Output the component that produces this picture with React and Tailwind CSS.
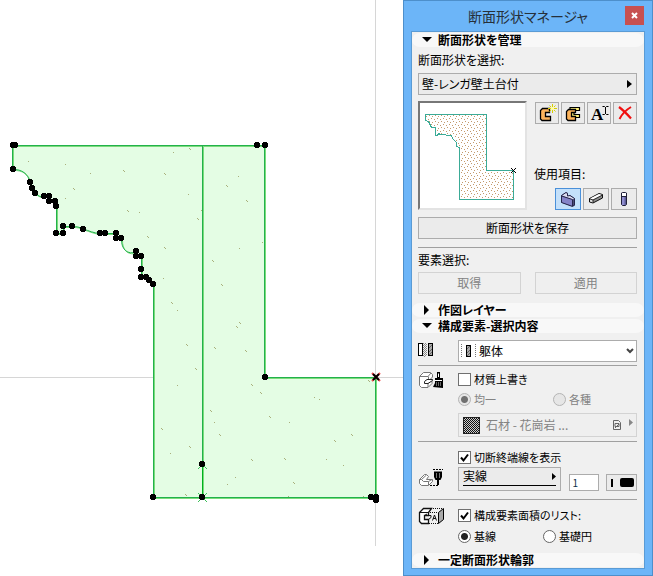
import { useState } from 'react';
import clsx from 'clsx';

const outline =
  'M12.5 145.5H264.5V377.5H375.5V497.5H153.5V284L149 280L146 277.5H141.5V256.5H136.5V252C128 255 121 250 121.5 238.5H116.5V233.5H100C93 233 90 231 83 229C79 227 77 226.5 72 226.5H63.5V233.5H56.5V206L55 201.5H49.5V196.5H44C40 197 38 196 35 193L32 188L30 182C28 174 22 169 12.5 169.5Z';

const nodes = [
  [13, 145], [15, 145], [257, 145], [265, 145], [13, 169], [30, 182], [32, 188], [35, 193],
  [44, 196], [49, 196], [49, 201], [55, 201], [56, 206], [56, 233], [63, 233], [63, 226],
  [72, 226], [83, 229], [100, 233], [105, 233], [116, 233], [116, 238], [121, 238],
  [136, 251], [136, 256], [141, 256], [141, 269], [141, 277], [146, 277], [149, 280],
  [153, 284], [153, 497], [202, 464], [202, 497], [371, 497], [376, 497], [376, 500], [265, 377],
];

const specks = [
  [28, 161], [65, 164], [90, 173], [115, 146], [173, 152], [65, 198], [188, 194], [139, 212],
  [201, 210], [163, 278], [238, 176], [239, 248], [262, 242], [177, 310], [177, 385],
  [214, 422], [170, 453], [235, 477], [227, 484], [289, 422], [314, 397], [319, 399],
  [326, 459], [343, 465], [288, 496], [363, 496],
];

const doubleSpecks = [
  [123, 170], [189, 148], [164, 173], [73, 188], [127, 210], [197, 218], [147, 236], [164, 247],
  [226, 185], [246, 200], [212, 260], [221, 284], [171, 302], [186, 344], [214, 347], [245, 350],
  [236, 326], [239, 322], [195, 368], [251, 384], [368, 380], [260, 392], [269, 416],
  [210, 410], [219, 434], [161, 428], [189, 446], [251, 459], [284, 458], [293, 482],
  [334, 440], [351, 434], [185, 494],
];

function ProfileCanvas() {
  return (
    <svg className="block h-[576px] w-full" viewBox="0 0 403 576" preserveAspectRatio="xMinYMin slice" fill="none">
      <path d="M375.5 0V546M0 377.5H403" stroke="#d6d6d6" />
      <path d={outline} fill="#e4fde4" />
      <path d={outline} stroke="#7bdc7b" transform="translate(1 1)" />
      <path d="M203.5 146V497" stroke="#7bdc7b" />
      <path d={outline} stroke="#22b14c" />
      <path d="M202.5 146V497" stroke="#22b14c" />
      <path d="M202.5 464V497" stroke="#00b020" />
      <g fill="#a9b07c">
        {specks.map(([x, y]) => <rect key={`${x}-${y}`} x={x} y={y} width="1" height="1" />)}
        {doubleSpecks.map(([x, y]) => (
          <path key={`${x}-${y}`} d={`M${x} ${y}h1v1h1v1h-1v-1h-1z`} />
        ))}
      </g>
      <path d="M198 469l3-3M207 469l-3-3M198 493l9 9M207 493l-9 9" stroke="#3cc05a" />
      {nodes.map(([x, y]) => (
        <path key={`${x}-${y}`} d={`M${x - 2} ${y - 3}h4v1h1v4h-1v1h-4v-1h-1v-4h1z`} fill="#000" />
      ))}
      <path d="M372 373l8 8M380 373l-8 8" stroke="#f04848" strokeWidth="2" />
      <path d="M373 374l6 6M379 374l-6 6" stroke="#000" strokeWidth="2" />
    </svg>
  );
}

function Preview() {
  return (
    <div className="size-[109px] shrink-0 border-2 border-t-[#777] border-l-[#777] border-r-[#e3e3e3] border-b-[#e3e3e3] bg-white">
      <svg className="block size-[105px]" viewBox="0 0 105 105" shapeRendering="crispEdges">
        <defs>
          <pattern id="dots" width="6" height="6" patternUnits="userSpaceOnUse">
            <path d="M0 1h1v1H0zM3 0h1v1H3zM5 3h1v1H5zM2 4h1v1H2z" fill="#c39a6b" />
          </pattern>
        </defs>
        <path
          d="M5.500 11.500H66.500V67.500H93.500V96.500H39.500V44.500L36.500 43.500V39.500L34.500 37.500L32.500 35.500L31.500 32.500L20.500 31.500L18.500 30.500L17.500 32.500H15.500V24.500H11.500L10.500 22.500L8.500 18.500L5.500 17.500Z"
          fill="url(#dots)"
          stroke="#3bab97"
        />
        <path d="M91 65l5 5M96 65l-5 5" stroke="#000" />
      </svg>
    </div>
  );
}

const icons = {
  create: (
    <>
      <path d="M6.500 5.500H13.500V9.500H9.500V13.500H14.500V17.500H6L4.500 16V7.500Z" fill="#fdb45c" stroke="#000" strokeWidth="1.300" />
      <path d="M16.500 1v9M12 5.500h9M13.500 2.500l6 6M19.500 2.500l-6 6" stroke="#d8d000" />
      <path d="M15 4h3v3h-3z" fill="#fffba0" />
    </>
  ),
  duplicate: (
    <>
      <path d="M8 4.500H17.500V7.500H12V11.500H17.500V14.500H8Z" fill="#fff27a" stroke="#000" strokeWidth="1.200" />
      <path d="M6.500 6.500H13.500V9.500H9.500V13.500H13.500V17.500H6L4.500 16V8.500Z" fill="#fdb45c" stroke="#000" strokeWidth="1.300" />
    </>
  ),
  rename: (
    <>
      <text x="3" y="17" fontSize="17" fontWeight="bold" fontFamily="Liberation Serif, serif" fill="#000">A</text>
      <path d="M14.500 3.500H16.500L17.500 4.500L18.500 3.500H20.500M17.500 4V11M14.500 11.500H16.500L17.500 10.500L18.500 11.500H20.500" stroke="#000" />
    </>
  ),
  remove: (
    <>
      <path d="M5 4C9 7 13 11 17 15.500" stroke="#f01010" strokeWidth="2.200" />
      <path d="M17 4C12 7 8 11 5.500 16" stroke="#f01010" strokeWidth="2" />
    </>
  ),
  wall: (
    <>
      <path d="M4 6.500L9 3L11 4V7L13 6L18 9.500V16.500L15.500 17.500L4 13.500Z" fill="#4c4b78" />
      <path d="M4.500 7L15.500 10.500V17L4.500 13.500Z" fill="#8583c8" />
      <path d="M4.500 6.500L9 3.500L10.500 4.500V7L13 6.500L17.500 9.500L15.500 10.500Z" fill="#dcdcf0" />
      <path d="M4.500 6.500L9 3.500L10.500 4.500V7L13 6.500L17.500 9.500V16L15.500 17.500L4.500 13.500ZM4.500 7L15.500 10.500V17" stroke="#26264a" />
    </>
  ),
  beam: (
    <>
      <path d="M4.500 9.500L14 4.500L17.500 5.500V9L8 14L4.500 13Z" fill="#8d8d8d" stroke="#111" />
      <path d="M5 9.500L14 5L17 6L8 10.500Z" fill="#fff" />
      <path d="M5 10L8 11V13.500L5 12.500Z" fill="#ddd" />
      <path d="M4.500 9.800L8 11M8 11L17.500 6M8 11V14" stroke="#111" strokeWidth="0.800" />
    </>
  ),
  column: (
    <>
      <path d="M8.500 4L9.500 3.500H12.500L13.500 4V15.500L12.500 16.500H9.500L8.500 15.500Z" fill="#8f8dd0" stroke="#202038" />
      <path d="M11.500 7H13V16H11.500Z" fill="#5d5c96" />
      <path d="M9 4H13V7H9Z" fill="#fff" />
      <path d="M9 7.500H13" stroke="#202038" />
    </>
  ),
};

function IconButton({ icon, label, pressed, className }) {
  return (
    <button
      aria-label={label}
      className={clsx(
        'flex h-[22px] items-center justify-center border',
        pressed ? 'border-[#4a90d9] bg-[#c4e0fa]' : 'border-[#acacac] bg-[#ebebeb] hover:border-[#7eb4ea]',
        className,
      )}
    >
      <svg className="h-5 w-[22px] shrink-0" viewBox="0 0 22 20" fill="none">{icons[icon]}</svg>
    </button>
  );
}

function SectionHeader({ title, open, className }) {
  return (
    <button
      aria-expanded={!!open}
      className={clsx('flex h-4 items-center rounded-full bg-[#f8f8f8] bg-clip-content py-px text-[12px] leading-4 font-bold', className)}
    >
      <svg className="ml-[10px] mr-[6px] size-[10px]" viewBox="0 0 10 10">
        {open ? <path d="M0 2h10L5 7z" /> : <path d="M2 0v10l5-5z" />}
      </svg>
      {title}
    </button>
  );
}

function Check({ label, defaultChecked }) {
  return (
    <label className="relative flex h-4 items-center gap-[3px] text-[11px] leading-4">
      <input
        type="checkbox"
        defaultChecked={defaultChecked}
        className="peer size-[13px] appearance-none border border-[#707070] bg-white"
      />
      <svg className="pointer-events-none absolute left-0 hidden size-[13px] peer-checked:block" viewBox="0 0 13 13" fill="none">
        <path d="M3 6.500l2.500 3L10 3.500" stroke="#000" strokeWidth="2" />
      </svg>
      {label}
    </label>
  );
}

function Radio({ label, disabled, ...props }) {
  return (
    <label className={clsx('flex h-4 items-center gap-[3px] text-[11px] leading-4', disabled && 'text-[#838383]')}>
      <input
        type="radio"
        disabled={disabled}
        className="size-[13px] appearance-none rounded-full border border-[#666] bg-white checked:bg-[radial-gradient(circle,#222_0_3px,transparent_4px)] disabled:border-[#b4b4b4] disabled:bg-[#e6e6e6] disabled:checked:bg-[radial-gradient(circle,#707070_0_3px,transparent_4px)]"
        {...props}
      />
      {label}
    </label>
  );
}

function Divider({ className }) {
  return <hr className={clsx('h-px border-0 bg-[#a0a0a0]', className)} />;
}

function ComponentIcon() {
  return (
    <svg className="mt-[3px] h-[14px] w-4" viewBox="0 0 16 14" fill="none" shapeRendering="crispEdges">
      <path d="M.5.500h4v12h-4z" fill="#fff" stroke="#000" />
      <path d="M5.500 0v13M7.500 0v13" stroke="#888" strokeDasharray="1 1" />
      <path d="M6.500 1v13M8.500 1v12" stroke="#888" strokeDasharray="1 1" />
      <path d="M10.500.500h4v12h-4z" fill="#aaa" stroke="#000" />
      <path d="M11 5l3-3M11 9l3-3M11 12l3-3" stroke="#666" />
    </svg>
  );
}

function SurfaceIcon() {
  return (
    <svg className="h-[18px] w-[26px]" viewBox="0 0 26 18" fill="none">
      <path d="M1.500 5.500L5.500 1.500H12.500L14.500 3.500V6L11 9.500H7.500V12.500H10L14 9.500V12.500L10 16.500H3.500L1.500 14.500Z" fill="#fff" stroke="#777" />
      <path d="M1.500 5.500H10L13 2M10.500 5.500V9M10 12.500V16" stroke="#777" />
      <path d="M6.500 10.500L9 8.500H14.500V9.500L10 12.500H6.500Z" fill="#fff" stroke="#222" />
      <path d="M19 1h3v6h3v10l-10-1l2-4V7h2z" fill="#000" />
      <path d="M20.500 2.500V6M17 9.500H24" stroke="#fff" />
      <path d="M18.500 11v4M20.500 11v4M22.500 11v4" stroke="#666" />
    </svg>
  );
}

function CutLineIcon() {
  return (
    <svg className="h-[18px] w-[26px]" viewBox="0 0 26 18" fill="none">
      <path d="M1.500 10.500L6.500 5.500H8.500L10.500 7.500L8.500 10.500H14.500V12.500L10.500 16.500H3.500L1.500 14.500Z" fill="#fff" stroke="#777" />
      <path d="M1.500 10.500H3.500L8.500 6M3.500 10.500L5.500 12.500H10.500L14 10.500M10.500 12.500V16" stroke="#777" />
      <path d="M15 .500H25M12 16.500H20" stroke="#000" strokeDasharray="2 1" />
      <path d="M16 2.500H24V8L22.500 11H17.500L16 8Z" fill="#000" />
      <path d="M18.500 4V9M21.500 4V9" stroke="#777" />
      <path d="M20 10V16" stroke="#000" strokeWidth="2" />
    </svg>
  );
}

function AreaIcon() {
  return (
    <svg className="h-[18px] w-[27px]" viewBox="0 0 27 18" fill="none">
      <path d="M1.500 5.500L5.500 1.500H13.500L10.500 5.500V8.500H6.500V12.500H10.500V16.500H3.500L1.500 14.500Z" fill="#fff" stroke="#111" strokeWidth="1.300" />
      <path d="M2 5.500H10.500M6.500 8.500L9 7M10.500 12.500L13 10.500V8.500H7" stroke="#111" />
      <path d="M13 1.500H25M11 16.500H20M12 5.500H20" stroke="#111" strokeDasharray="1 1" />
      <path d="M20.500 5.500L25.500 1.500V12.500L20.500 16.500Z" fill="#aaa" stroke="#000" />
      <path d="M14.500 13.500L16.500 8L18.500 13.500M15 11.500H18" stroke="#111" />
    </svg>
  );
}

const pushButton = 'border border-[#acacac] bg-[#ebebeb] text-[12px] leading-4 hover:border-[#7eb4ea]';
const disabledButton = 'border border-[#d3d3d3] bg-[#efefef] text-[12px] leading-4 text-[#838383]';

export default function App() {
  const [area, setArea] = useState('base');

  return (
    <div className="flex items-start bg-white font-['Noto_Sans_CJK_JP',sans-serif] text-black [font-feature-settings:'palt']">
      <main className="min-w-0 flex-1">
        <ProfileCanvas />
      </main>

      <aside className="w-[250px] shrink-0 border border-[#4d8fcb] bg-[#6cb5f8] px-[7px] pb-[6px]">
        <div className="relative flex h-[30px] items-center justify-center">
          <h1 className="text-[14px] leading-5 text-[#26303a]">断面形状マネージャ</h1>
          <button aria-label="閉じる" className="absolute right-[1px] top-[5px] flex h-[19px] w-[19px] items-center justify-center bg-[#c75050]">
            <svg className="size-[7px]" viewBox="0 0 7 7">
              <path d="M1 1l5 5M6 1L1 6" stroke="#fff" strokeWidth="2" />
            </svg>
          </button>
        </div>

        <div className="flex flex-col border border-[#5a9bd5] bg-[#f0f0f0]">
          <SectionHeader title="断面形状を管理" open />

          <section className="flex flex-col pr-[7px] pl-[6px]">
            <span className="mt-1 text-[12px] leading-4">断面形状を選択:</span>
            <button className={clsx(pushButton, 'mt-[5px] flex h-[22px] items-center justify-between px-[3px]')}>
              壁-レンガ壁土台付
              <svg className="mr-[1px] h-2 w-[5px]" viewBox="0 0 5 8"><path d="M0 0v8l5-4z" /></svg>
            </button>

            <div className="mt-[6px] flex justify-between">
              <Preview />
              <div className="flex w-[103px] flex-col">
                <div className="mt-px flex justify-end gap-[2px]">
                  <IconButton icon="create" label="新規" className="w-6" />
                  <IconButton icon="duplicate" label="複製" className="w-6" />
                  <IconButton icon="rename" label="名称変更" className="w-6" />
                  <IconButton icon="remove" label="削除" className="w-6" />
                </div>
                <span className="mt-auto text-[12px] leading-4">使用項目:</span>
                <div className="mt-[6px] flex justify-end gap-[2px]">
                  <IconButton icon="wall" label="壁" pressed className="w-[26px]" />
                  <IconButton icon="beam" label="梁" className="w-[26px]" />
                  <IconButton icon="column" label="柱" className="w-[26px]" />
                </div>
              </div>
            </div>

            <button className={clsx(pushButton, 'mt-[7px] h-[22px]')}>断面形状を保存</button>
            <Divider className="mt-2" />
            <span className="mt-1 text-[12px] leading-4">要素選択:</span>
            <div className="mt-1 grid grid-cols-2 gap-[14px]">
              <button disabled className={clsx(disabledButton, 'h-[22px]')}>取得</button>
              <button disabled className={clsx(disabledButton, 'h-[22px]')}>適用</button>
            </div>
          </section>

          <SectionHeader title="作図レイヤー" className="mt-2" />
          <SectionHeader title="構成要素-選択内容" open />

          <section className="flex flex-col pr-[7px] pl-[6px]">
            <div className="mt-[6px] grid grid-cols-[40px_1fr]">
              <ComponentIcon />
              <div className="relative">
                <select aria-label="構成要素" className="block h-[22px] w-full appearance-none border border-[#acacac] bg-white pl-5 text-[12px] leading-4">
                  <option>躯体</option>
                </select>
                <svg className="pointer-events-none absolute left-[3px] top-1 h-[14px] w-4" viewBox="0 0 16 14" fill="none" shapeRendering="crispEdges">
                  <path d="M.5 0v14M14.500 0v14" stroke="#777" strokeDasharray="1 1" />
                  <path d="M5.500 1.500h4v11h-4z" fill="#aaa" stroke="#000" />
                  <path d="M6 5l3-3M6 9l3-3M6 12l3-3" stroke="#666" />
                </svg>
                <svg className="pointer-events-none absolute right-[3px] top-2 h-[6px] w-2" viewBox="0 0 8 6" fill="none">
                  <path d="M1 1l3 3l3-3" stroke="#444" strokeWidth="2" />
                </svg>
              </div>
            </div>

            <Divider className="mt-[3px]" />
            <div className="mt-[5px] grid grid-cols-[40px_1fr]">
              <SurfaceIcon />
              <div className="flex flex-col">
                <Check label="材質上書き" />
                <div className="mt-1 grid grid-cols-[95px_1fr]">
                  <Radio name="surface" label="均一" disabled defaultChecked />
                  <Radio name="surface" label="各種" disabled />
                </div>
                <button disabled className={clsx(disabledButton, 'mt-[6px] flex h-6 items-center pr-[3px] pl-1')}>
                  <svg className="mr-[6px] size-[17px]" viewBox="0 0 17 17" shapeRendering="crispEdges">
                    <defs>
                      <pattern id="check" width="2" height="2" patternUnits="userSpaceOnUse">
                        <path d="M0 0h1v1H0zM1 1h1v1H1z" fill="#111" />
                      </pattern>
                    </defs>
                    <path d="M.5.500h16v16H.5z" fill="#ccc" />
                    <path d="M.5.500h16v16H.5z" fill="url(#check)" stroke="#222" />
                  </svg>
                  石材 - 花崗岩 ...
                  <svg className="ml-auto h-[10px] w-2" viewBox="0 0 8 10" fill="none">
                    <path d="M.5.500h5l2 2v7h-7z" stroke="#666" />
                    <path d="M2 3.500h4v3H2zM2 8l4-4" stroke="#666" />
                  </svg>
                  <svg className="mb-[6px] ml-2 h-[7px] w-1" viewBox="0 0 4 7"><path d="M0 0v7l4-3.500z" fill="#888" /></svg>
                </button>
              </div>
            </div>

            <Divider className="mt-1" />
            <div className="mt-[7px] grid grid-cols-[40px_1fr]">
              <div className="flex items-end pb-1"><CutLineIcon /></div>
              <div className="flex flex-col">
                <Check label="切断終端線を表示" defaultChecked />
                <div className="mt-[2px] flex items-end justify-between">
                  <button className={clsx(pushButton, 'flex h-6 w-[103px] flex-col px-1')}>
                    <span className="flex w-full items-center justify-between">
                      実線
                      <svg className="h-[7px] w-1" viewBox="0 0 4 7"><path d="M0 0v7l4-3.500z" /></svg>
                    </span>
                    <span className="mt-px h-px w-full bg-black" />
                  </button>
                  <input aria-label="ペン番号" defaultValue="1" className="h-[17px] w-[30px] border border-[#acacac] bg-white px-[3px] text-[10px] leading-4 text-[#10304a]" />
                  <button aria-label="ペンカラー" className="flex h-[17px] w-[31px] items-center justify-between border border-[#acacac] bg-[#ebebeb] pr-[2px] pl-1">
                    <span className="h-2 w-[2px] bg-black" />
                    <span className="h-[9px] w-[14px] rounded-[2px] bg-black" />
                  </button>
                </div>
              </div>
            </div>

            <Divider className="mt-2" />
            <div className="mt-[7px] grid grid-cols-[40px_1fr]">
              <AreaIcon />
              <div className="flex flex-col">
                <Check label="構成要素面積のリスト:" defaultChecked />
                <div className="mt-[5px] grid grid-cols-[85px_1fr]">
                  <Radio name="area" label="基線" checked={area === 'base'} onChange={() => setArea('base')} />
                  <Radio name="area" label="基礎円" checked={area === 'circle'} onChange={() => setArea('circle')} />
                </div>
              </div>
            </div>
          </section>

          <SectionHeader title="一定断面形状輪郭" className="mt-[8px]" />
        </div>
      </aside>
    </div>
  );
}
